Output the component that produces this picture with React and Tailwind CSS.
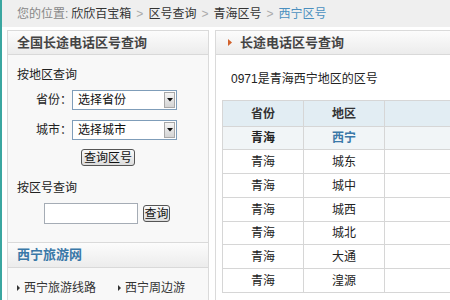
const rows = [
  { p: "青海", c: "西宁", h: "h-[23px]", hl: true },
  { p: "青海", c: "城东", h: "h-[24px]" },
  { p: "青海", c: "城中", h: "h-[24px]" },
  { p: "青海", c: "城西", h: "h-[24px]" },
  { p: "青海", c: "城北", h: "h-[23px]" },
  { p: "青海", c: "大通", h: "h-[24px]" },
  { p: "青海", c: "湟源", h: "h-[24px]" },
];

function FakeSelect({ label, value }) {
  return (
    <div className="flex items-center ml-[28px] h-[20px]">
      <span className="w-[36px] text-[12px] leading-[16px] text-[#222]">{label}</span>
      <div className="w-[105px] h-[20px] border border-[#7f9db9] bg-white flex items-center justify-between pl-[5px] pr-[1px]">
        <span className="text-[12px] leading-[16px] text-[#111]">{value}</span>
        <span className="w-[11px] h-[16px] border border-[#a8a8a8] bg-linear-to-b from-[#f4f4f4] to-[#d4d4d4] flex items-center justify-center">
          <svg width="6" height="4" viewBox="0 0 6 4">
            <path d="M0 0h6L3 3.5z" fill="#111" />
          </svg>
        </span>
      </div>
    </div>
  );
}

function PanelHead({ h = "h-[24px]", children }) {
  return (
    <div className={`${h} border-b border-[#d9d9d9] bg-linear-to-b from-[#fcfcfc] to-[#ececec] flex items-center`}>
      {children}
    </div>
  );
}

function Arrow() {
  return (
    <svg width="3" height="6" viewBox="0 0 3 6" className="mr-[4px]">
      <path d="M0 0l3 3-3 3z" fill="#333" />
    </svg>
  );
}

export default function App() {
  return (
    <div className="w-[450px] h-[300px] overflow-hidden bg-white border-l-2 border-[#3aa6a0] font-['Liberation_Sans','Noto_Sans_CJK_SC',sans-serif] text-[#222]">
      {/* 面包屑 */}
      <div className="h-[27px] bg-[#efefef] flex items-center pl-[15px] text-[12px]">
        <span className="text-[#888]">您的位置: </span>
        <span className="text-[#333] ml-[3px]">欣欣百宝箱</span>
        <span className="text-[#aaa] mx-[5px]">&gt;</span>
        <span className="text-[#333]">区号查询</span>
        <span className="text-[#aaa] mx-[5px]">&gt;</span>
        <span className="text-[#333]">青海区号</span>
        <span className="text-[#aaa] mx-[5px]">&gt;</span>
        <span className="text-[#4a8fbf]">西宁区号</span>
      </div>

      <div className="flex mt-[3px] h-[270px]">
        {/* 左侧 */}
        <div className="ml-[5px] w-[202px] shrink-0 border-t border-x border-[#dadada] bg-[#f8f8f8]">
          <PanelHead>
            <span className="pl-[9px] text-[13px] font-bold text-[#444]">全国长途电话区号查询</span>
          </PanelHead>
          <div className="pl-[9px] mt-[12px] text-[12px] leading-[16px]">按地区查询</div>
          <div className="mt-[7px]">
            <FakeSelect label="省份：" value="选择省份" />
          </div>
          <div className="mt-[10px]">
            <FakeSelect label="城市：" value="选择城市" />
          </div>
          <button className="mt-[9px] ml-[73px] w-[54px] h-[17px] rounded-[3px] border border-[#555] bg-linear-to-b from-[#fafafa] to-[#dcdcdc] text-[12px] leading-[14px] text-[#111] flex items-center justify-center">
            查询区号
          </button>
          <div className="pl-[9px] mt-[14px] text-[12px] leading-[16px]">按区号查询</div>
          <div className="flex items-center mt-[7px] ml-[36px] h-[21px]">
            <div className="w-[94px] h-[21px] border border-[#a5acb5] bg-white" />
            <button className="ml-[5px] w-[27px] h-[17px] rounded-[3px] border border-[#555] bg-linear-to-b from-[#fafafa] to-[#dcdcdc] text-[12px] leading-[14px] text-[#111] flex items-center justify-center">
              查询
            </button>
          </div>
          <div className="mt-[18px] border-t border-[#dadada]">
            <PanelHead h="h-[25px]">
              <span className="pl-[9px] text-[13px] font-bold text-[#3a78a8]">西宁旅游网</span>
            </PanelHead>
          </div>
          <div className="flex items-center mt-[12px] pl-[9px] text-[12px] leading-[16px] text-[#333]">
            <span className="flex items-center w-[101px]">
              <Arrow />西宁旅游线路
            </span>
            <span className="flex items-center">
              <Arrow />西宁周边游
            </span>
          </div>
        </div>

        {/* 右侧 */}
        <div className="ml-[6px] flex-1 min-w-0 overflow-hidden border-t border-l border-[#dadada] bg-white">
          <PanelHead>
            <svg width="4" height="7" viewBox="0 0 4 7" className="ml-[12px] mr-[8px]">
              <path d="M0 0l4 3.5L0 7z" fill="#d2622c" />
            </svg>
            <span className="text-[13px] font-bold text-[#444]">长途电话区号查询</span>
          </PanelHead>
          <div className="pl-[15px] mt-[16px] text-[12px] leading-[16px] text-[#222]">0971是青海西宁地区的区号</div>
          <div className="mt-[13px] ml-[6px] w-[300px] border-t border-l border-[#d6d6d6] text-[12px]">
            <div className="flex h-[26px] bg-[#e2edf3] border-b border-[#d6d6d6] font-bold text-[#333]">
              <div className="w-[81px] border-r border-[#d6d6d6] flex items-center justify-center">省份</div>
              <div className="w-[81px] border-r border-[#d6d6d6] flex items-center justify-center">地区</div>
              <div className="flex-1" />
            </div>
            {rows.map((r) => (
              <div
                key={r.c}
                className={`flex ${r.h} border-b border-[#d6d6d6] ${r.hl ? "bg-[#f1f5f7] font-bold" : "bg-white"}`}
              >
                <div className="w-[81px] border-r border-[#d6d6d6] flex items-center justify-center text-[#222]">{r.p}</div>
                <div className={`w-[81px] border-r border-[#d6d6d6] flex items-center justify-center ${r.hl ? "text-[#3a78a8]" : "text-[#222]"}`}>
                  {r.c}
                </div>
                <div className="flex-1" />
              </div>
            ))}
          </div>
        </div>
      </div>
    </div>
  );
}
